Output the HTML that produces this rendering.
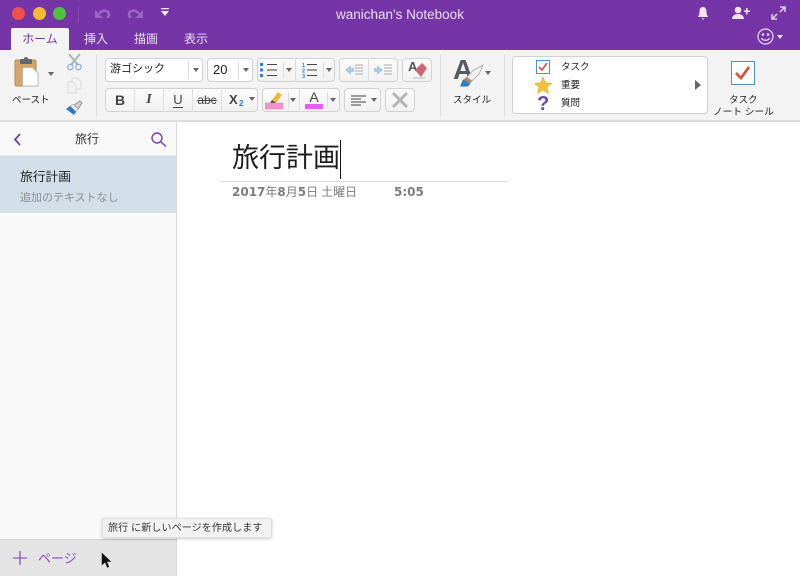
<!DOCTYPE html>
<html lang="ja"><head><meta charset="utf-8"><title>wanichan's Notebook</title>
<style>
html,body{margin:0;padding:0;width:800px;height:576px;overflow:hidden;background:#fff}
body{position:relative;font-family:"Liberation Sans","Noto Sans CJK JP",sans-serif;color:#222}
div,svg{position:absolute;box-sizing:border-box}
.t{white-space:nowrap;line-height:1}
.box{background:linear-gradient(#fbfbfb,#f1f1f1);border:1px solid #d2d2d2;border-radius:4px}
.w{background:#fff;border:1px solid #d0d0d0;border-radius:4px}
.sep{width:1px;background:#dedede}
.arr{width:0;height:0;border-left:3px solid transparent;border-right:3px solid transparent;border-top:4px solid #666}
</style></head><body>
<div style="left:0;top:0;width:800px;height:50px;background:#7535a6"></div>
<div style="left:12px;top:7px;width:13px;height:13px;border-radius:50%;background:#f0504c"></div>
<div style="left:33px;top:7px;width:13px;height:13px;border-radius:50%;background:#f6b82f"></div>
<div style="left:53px;top:7px;width:13px;height:13px;border-radius:50%;background:#4fc13c"></div>
<div style="left:78px;top:6px;width:1px;height:16px;background:#8549b3"></div>
<svg style="left:94px;top:8px" width="18" height="12" viewBox="0 0 18 12"><path d="M1 2v8h8z" fill="#9a66c8"/><path d="M5 5.500C8 1.500 15.500 1.500 15 7.500L13.500 10" fill="none" stroke="#9a66c8" stroke-width="2.600"/></svg>
<svg style="left:126px;top:8px" width="18" height="12" viewBox="0 0 18 12"><path d="M17 2v8H9z" fill="#9a66c8"/><path d="M13 5.500C10 1.500 2.500 1.500 3 7.500L4.500 10" fill="none" stroke="#9a66c8" stroke-width="2.600"/></svg>
<svg style="left:161px;top:8px" width="9" height="9" viewBox="0 0 9 9"><path d="M0 0h8v1.300H0zM0 3h8L4 8z" fill="#f6effa"/></svg>
<div class="t" style="left:0;top:8px;width:800px;text-align:center;color:#eadff3;font-size:13.500px">wanichan's Notebook</div>
<svg style="left:695px;top:5px" width="16" height="16" viewBox="0 0 16 16" fill="#efe6f6"><path d="M8 2c-2.500 0-3.500 2-3.500 4.500 0 3-.7 4-1.500 5.500h10c-.8-1.500-1.500-2.500-1.500-5.500C11.500 4 10.500 2 8 2zM6.500 13.500h3L8 15z"/></svg>
<svg style="left:732px;top:6px" width="18" height="14" viewBox="0 0 18 14" fill="#efe6f6"><circle cx="6" cy="4" r="3.300"/><path d="M0 13c0-3.500 3-5 6-5s6 1.500 6 5zM12 4.500h2V2h1.500v2.500H18V6h-2.500v2.500H14V6h-2z"/></svg>
<svg style="left:771px;top:6px" width="15" height="14" viewBox="0 0 15 14" fill="none" stroke="#efe6f6" stroke-width="1.300"><path d="M9 1h5v5M14 1L9 6M1 8v5h5M1 13l5-5"/></svg>
<div style="left:11px;top:28px;width:58px;height:22px;background:#f3f3f3;border-radius:2px 2px 0 0"></div>
<div class="t" style="left:11px;top:33px;width:58px;text-align:center;font-size:12px;color:#7535a6">ホーム</div>
<div class="t" style="left:84px;top:33px;font-size:12px;color:#eadff3">挿入</div>
<div class="t" style="left:134px;top:33px;font-size:12px;color:#eadff3">描画</div>
<div class="t" style="left:184px;top:33px;font-size:12px;color:#eadff3">表示</div>
<svg style="left:756px;top:27px" width="20" height="20" viewBox="0 0 20 20" fill="none" stroke="#e9dcf3" stroke-width="1.200"><circle cx="9.500" cy="9.500" r="7.500"/><path d="M5.500 11c1 3 7 3 8 0"/><circle cx="7" cy="7.500" r=".7"/><circle cx="12" cy="7.500" r=".7"/></svg>
<div class="arr" style="left:777px;top:35px;border-top-color:#e9dcf3"></div>

<div style="left:0;top:50px;width:800px;height:72px;background:#f3f3f3;border-bottom:2px solid #dcdcdc"></div>
<!-- paste -->
<svg style="left:14px;top:56px" width="26" height="32" viewBox="0 0 26 32"><rect x="1" y="4" width="21" height="26" rx="1.500" fill="#d9a566" stroke="#b08a5a"/><rect x="6" y="3" width="12" height="5" rx="1" fill="#5f6a70"/><circle cx="12" cy="3" r="2" fill="#5f6a70"/><path d="M8.500 11.500h10l5.500 5.500v13H8.500z" fill="#fff" stroke="#aaa" stroke-width=".8"/></svg>
<div class="arr" style="left:48px;top:72px"></div>
<div class="t" style="left:12px;top:96px;font-size:9.500px;color:#222">ペースト</div>
<svg style="left:66px;top:53px" width="17" height="18" viewBox="0 0 17 18" fill="none"><path d="M3 1l9 11M14 1L5 12" stroke="#b0b4b8" stroke-width="2"/><circle cx="4.500" cy="14" r="2.700" stroke="#8fb2d4" stroke-width="1.300"/><circle cx="12.500" cy="14" r="2.700" stroke="#8fb2d4" stroke-width="1.300"/></svg>
<svg style="left:67px;top:77px" width="15" height="17" viewBox="0 0 15 17" fill="#f3f3f3" stroke="#d9d9d9"><path d="M5 1h5l4 4v7H5z"/><path d="M1 5h5l3 3v8H1z"/></svg>
<svg style="left:65px;top:100px" width="18" height="17" viewBox="0 0 18 17"><path d="M9 5l6-4 2 2-4 6z" fill="#d4d4d4" stroke="#777" stroke-width=".7"/><path d="M5 6l3-2 5 5-2 3z" fill="#e8e8e8" stroke="#888" stroke-width=".5"/><path d="M1 9l4-3 6 6-2 3z" fill="#2f77bd"/></svg>
<div class="sep" style="left:96px;top:54px;height:62px"></div>
<!-- font -->
<div class="w" style="left:105px;top:58px;width:98px;height:24px"></div>
<div class="t" style="left:110px;top:64px;font-size:11px;color:#222">游ゴシック</div>
<div class="sep" style="left:188px;top:61px;height:18px"></div>
<div class="arr" style="left:193px;top:68px"></div>
<div class="w" style="left:207px;top:58px;width:46px;height:24px"></div>
<div class="t" style="left:213px;top:63px;font-size:13px;color:#222">20</div>
<div class="sep" style="left:238px;top:61px;height:18px"></div>
<div class="arr" style="left:243px;top:68px"></div>
<!-- row 1 -->
<div class="box" style="left:257px;top:58px;width:78px;height:24px"></div>
<div class="sep" style="left:295px;top:58px;height:24px"></div>
<div class="sep" style="left:283px;top:62px;height:16px"></div>
<div class="sep" style="left:323px;top:62px;height:16px"></div>
<svg style="left:259px;top:62px" width="20" height="16" viewBox="0 0 20 16"><path d="M1 1h3v3H1zM1 6.500h3v3H1zM1 12h3v3H1z" fill="#2f7fd0"/><path d="M8 2.500h10M8 8h10M8 13.500h10" stroke="#444" stroke-width="1.100"/></svg>
<div class="arr" style="left:286px;top:68px"></div>
<svg style="left:301px;top:62px" width="18" height="16" viewBox="0 0 18 16"><text x="1" y="5" font-size="5.500" font-weight="700" fill="#2f7fd0" font-family="Liberation Sans">1</text><text x="1" y="10.500" font-size="5.500" font-weight="700" fill="#2f7fd0" font-family="Liberation Sans">2</text><text x="1" y="16" font-size="5.500" font-weight="700" fill="#2f7fd0" font-family="Liberation Sans">3</text><path d="M6 2.500h10M6 8h10M6 13.500h10" stroke="#444" stroke-width="1.100"/></svg>
<div class="arr" style="left:326px;top:68px"></div>
<div class="box" style="left:339px;top:58px;width:59px;height:24px"></div>
<div class="sep" style="left:368px;top:58px;height:24px"></div>
<svg style="left:344px;top:63px" width="20" height="14" viewBox="0 0 20 14"><path d="M1 7l6-5v3h3v4H7v3z" fill="#a9cbe8"/><path d="M11 2h8M11 5h8M11 8h8M11 11h8" stroke="#aaa"/></svg>
<svg style="left:373px;top:63px" width="20" height="14" viewBox="0 0 20 14"><path d="M10 7L4 2v3H1v4h3v3z" fill="#a9cbe8"/><path d="M11 2h8M11 5h8M11 8h8M11 11h8" stroke="#aaa"/></svg>
<div class="box" style="left:402px;top:58px;width:30px;height:24px"></div>
<div class="t" style="left:408px;top:60px;font-size:13px;font-weight:700;color:#555">A</div>
<svg style="left:412px;top:60px" width="18" height="20" viewBox="0 0 18 20"><path d="M3 10l7-7 5 5-6 9z" fill="#cf6476"/><path d="M1 18h12" stroke="#bbb"/></svg>
<!-- row 2 -->
<div class="box" style="left:105px;top:88px;width:153px;height:24px"></div>
<div class="sep" style="left:134px;top:88px;height:24px"></div>
<div class="sep" style="left:163px;top:88px;height:24px"></div>
<div class="sep" style="left:192px;top:88px;height:24px"></div>
<div class="sep" style="left:221px;top:88px;height:24px"></div>
<div class="t" style="left:105px;top:93px;width:30px;text-align:center;font-size:14px;font-weight:700;color:#444">B</div>
<div class="t" style="left:134px;top:93px;width:30px;text-align:center;font-size:14px;font-style:italic;font-family:'Liberation Serif',serif;font-weight:700;color:#444">I</div>
<div class="t" style="left:163px;top:93px;width:30px;text-align:center;font-size:13px;color:#444"><span style="border-bottom:1px solid #444">U</span></div>
<div class="t" style="left:192px;top:94px;width:30px;text-align:center;font-size:12px;color:#444;text-decoration:line-through">abc</div>
<div class="t" style="left:229px;top:93px;font-size:13px;font-weight:700;color:#444">X</div>
<div class="t" style="left:239px;top:100px;font-size:8px;font-weight:700;color:#2f7fd0">2</div>
<div class="arr" style="left:249px;top:97px"></div>
<div class="box" style="left:262px;top:88px;width:78px;height:24px"></div>
<div class="sep" style="left:288px;top:92px;height:16px"></div>
<div class="sep" style="left:299px;top:88px;height:24px"></div>
<svg style="left:265px;top:90px" width="20" height="20" viewBox="0 0 20 20"><path d="M7 10l6-8 4 3-6 8z" fill="#eeb73c"/><path d="M5 13l2-3 4 3-3 1z" fill="#444"/><rect x="0" y="13" width="18" height="6" fill="#f096cc" stroke="#d889b8" stroke-width=".5"/></svg>
<div class="arr" style="left:290px;top:98px"></div>
<div class="t" style="left:305px;top:90px;width:18px;text-align:center;font-size:14px;color:#444">A</div>
<div style="left:305px;top:104px;width:18px;height:5px;background:#e75fe8"></div>
<div class="arr" style="left:330px;top:98px"></div>
<div class="sep" style="left:327px;top:92px;height:16px"></div>
<div class="box" style="left:344px;top:88px;width:37px;height:24px"></div>
<svg style="left:351px;top:95px" width="16" height="11" viewBox="0 0 16 11"><path d="M0 1h15M0 4h10M0 7h15M0 10h10" stroke="#444"/></svg>
<div class="arr" style="left:371px;top:98px"></div>
<div class="box" style="left:385px;top:88px;width:30px;height:24px"></div>
<svg style="left:391px;top:92px" width="18" height="16" viewBox="0 0 18 16"><path d="M2 1l14 14M16 1L2 15" stroke="#b5b5b5" stroke-width="3"/></svg>
<div class="sep" style="left:440px;top:54px;height:62px"></div>
<!-- style -->
<div class="t" style="left:453px;top:56px;font-size:28px;font-weight:700;color:#555c62">A</div>
<svg style="left:458px;top:63px" width="28" height="25" viewBox="0 0 28 25"><path d="M25 2L15 7.500 9 14l5 4 7-7z" fill="#f0f0f0" stroke="#a8a8a8" stroke-width=".8"/><path d="M8 14l6 4.500-2.500 2.500-6-4z" fill="#a08a70"/><path d="M5 16.500l7 4.500-2 2.500H2z" fill="#2e7bc5"/></svg>
<div class="arr" style="left:485px;top:71px"></div>
<div class="t" style="left:453px;top:96px;font-size:9.500px;color:#222">スタイル</div>
<div class="sep" style="left:504px;top:54px;height:62px"></div>
<!-- tags -->
<div class="w" style="left:512px;top:56px;width:196px;height:58px"></div>
<svg style="left:536px;top:60px" width="15" height="15" viewBox="0 0 15 15"><rect x=".500" y=".500" width="13" height="13" fill="#fff" stroke="#4a8fd0"/><path d="M3 7l3 3 5-7" fill="none" stroke="#cd5a4c" stroke-width="1.800"/></svg>
<div class="t" style="left:561px;top:63px;font-size:9.500px;color:#222">タスク</div>
<svg style="left:534px;top:77px" width="18" height="17" viewBox="0 0 18 17"><path d="M9 0l2.500 5.800 6.200.5-4.700 4 1.500 6.200L9 13.200 3.500 16.500 5 10.300.3 6.300l6.200-.5z" fill="#f2c13c" stroke="#d9a82f" stroke-width=".5"/></svg>
<div class="t" style="left:561px;top:81px;font-size:9.500px;color:#222">重要</div>
<div class="t" style="left:537px;top:95px;font-size:20px;line-height:18px;font-weight:700;color:#7445a8">?</div>
<div class="t" style="left:561px;top:99px;font-size:9.500px;color:#222">質問</div>
<div style="left:695px;top:80px;width:0;height:0;border-top:5px solid transparent;border-bottom:5px solid transparent;border-left:6px solid #666"></div>
<svg style="left:731px;top:61px" width="25" height="25" viewBox="0 0 25 25"><rect x=".500" y=".500" width="23" height="23" fill="#fff" stroke="#4a8fd0"/><path d="M5 12l5 5 8-11" fill="none" stroke="#d6563f" stroke-width="2.800"/></svg>
<div class="t" style="left:729px;top:96px;font-size:9.500px;color:#222">タスク</div>
<div class="t" style="left:713px;top:108px;font-size:9.700px;color:#222">ノート シール</div>

<!-- sidebar -->
<div style="left:0;top:122px;width:177px;height:454px;background:#f9f9f9;border-right:1px solid #d8d8d8"></div>
<svg style="left:12px;top:132px" width="11" height="15" viewBox="0 0 11 15"><path d="M8 2L3 7.500 8 13" fill="none" stroke="#7535a6" stroke-width="1.700"/></svg>
<div class="t" style="left:75px;top:133px;font-size:12px;color:#333">旅行</div>
<svg style="left:150px;top:131px" width="18" height="17" viewBox="0 0 18 17" fill="none" stroke="#7c3db0" stroke-width="1.400"><circle cx="7" cy="7" r="5"/><path d="M10.500 10.500L16 15.500"/></svg>
<div style="left:0;top:155px;width:176px;height:1px;background:#e6e6e6"></div>
<div style="left:0;top:156px;width:176px;height:57px;background:#d2dfe9"></div>
<div class="t" style="left:20px;top:171px;font-size:12.750px;color:#222">旅行計画</div>
<div class="t" style="left:20px;top:193px;font-size:11px;color:#8a8f94">追加のテキストなし</div>
<div style="left:0;top:539px;width:176px;height:37px;background:#e4e4e4;border-top:1px solid #d4d4d4"></div>
<svg style="left:12px;top:550px" width="17" height="16" viewBox="0 0 17 16"><path d="M1 8h14M8 1v14" stroke="#7c3db0" stroke-width="1.100"/></svg>
<div class="t" style="left:38px;top:552px;font-size:13px;color:#8a4cc0">ページ</div>
<svg style="left:100px;top:551px" width="13" height="19" viewBox="0 0 13 19"><path d="M1.500 1v14l3.500-3 2 5 2.500-1-2-5h4.500z" fill="#111" stroke="#ddd" stroke-width=".6"/></svg>
<div style="left:102px;top:518px;width:170px;height:20px;background:#f2f2f2;border:1px solid #e0e0e0;border-radius:2px;box-shadow:0 1px 3px rgba(0,0,0,.2)"></div>
<div class="t" style="left:108px;top:524px;font-size:10px;letter-spacing:.12px;color:#333">旅行 に新しいページを作成します</div>

<!-- page -->
<div class="t" style="left:232px;top:145px;font-size:27px;color:#1c1c1c">旅行計画</div>
<div style="left:340px;top:140px;width:1px;height:39px;background:#111"></div>
<div style="left:220px;top:181px;width:288px;height:1px;background:#dcdcdc"></div>
<div class="t" style="left:232px;top:186px;font-size:12px;font-weight:700;color:#7d7d7d;font-family:'DejaVu Sans','Noto Sans CJK JP',sans-serif">2017<span style="font-weight:400;font-family:'Noto Sans CJK JP',sans-serif">年</span>8<span style="font-weight:400;font-family:'Noto Sans CJK JP',sans-serif">月</span>5<span style="font-weight:400;font-family:'Noto Sans CJK JP',sans-serif">日</span><span style="font-weight:400;font-family:'Noto Sans CJK JP',sans-serif;padding-left:3px">土曜日</span></div>
<div class="t" style="left:394px;top:186px;font-size:12px;font-weight:700;color:#7d7d7d;font-family:'DejaVu Sans',sans-serif">5:05</div>
</body></html>
